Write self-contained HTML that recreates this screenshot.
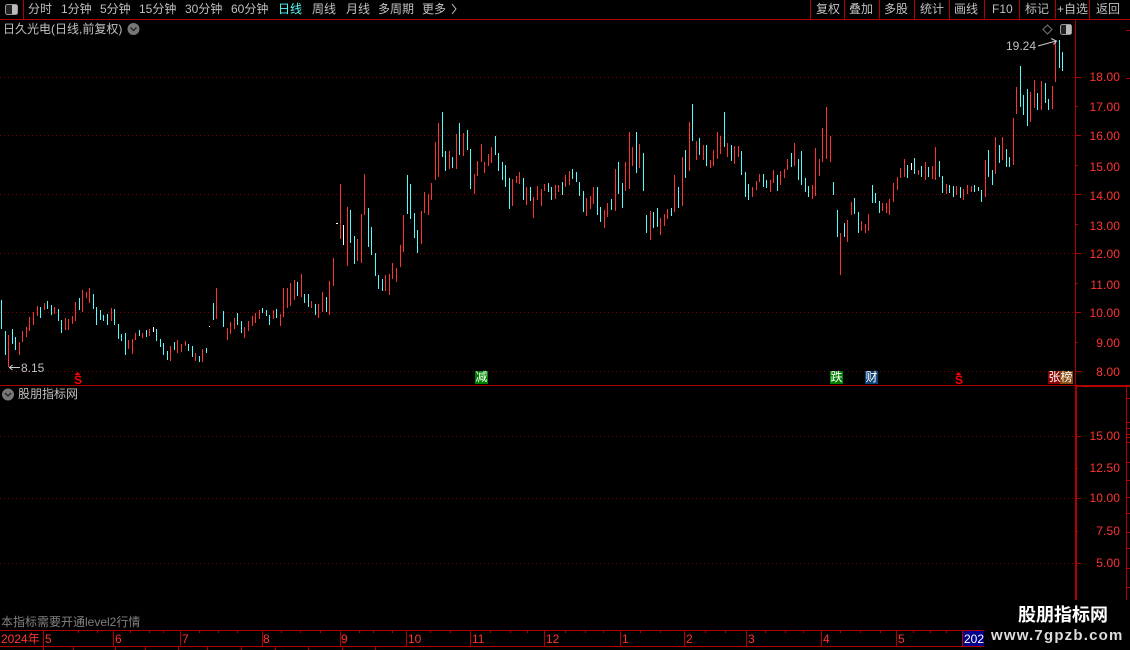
<!DOCTYPE html>
<html><head><meta charset="utf-8"><style>
html,body{margin:0;padding:0;background:#000}
#r{position:relative;width:1130px;height:650px;overflow:hidden;background:#000;font:12px/14px "Liberation Sans","WenQuanYi Zen Hei","Noto Sans CJK SC",sans-serif;color:#c0c0c0}
#r span{position:absolute;white-space:nowrap}
.a{color:#f33;width:50px;text-align:right;left:1070px;letter-spacing:.1px}
.b{top:2px}.x{color:#f33;top:632px;font-size:12px}
.m{color:#fff;width:13px;height:13px;line-height:13px;text-align:center;top:371px}
svg{position:absolute;left:0;top:0}
</style></head><body><div id="r">
<svg width="1130" height="650" shape-rendering="crispEdges" fill="none">
<g stroke="#800000" stroke-dasharray="1 3"><path d="M0 77.5H1075M0 135.5H1075M0 194.5H1075M0 253.5H1075M0 312.5H1075M0 371.5H1075M0 436.5H1075M0 498.5H1075M0 563.5H1075"/></g>
<path stroke="#ff3232" d="M8.5 335V367M19.5 342V355M22.5 331V342M26.5 327V337M29.5 317V331M33.5 312V325M37.5 306V316M44.5 303V310M54.5 307V314M65.5 318V330M68.5 319V330M72.5 316V324M75.5 302V321M82.5 290V312M86.5 292V298M89.5 288V303M111.5 308V321M128.5 340V349M132.5 339V354M135.5 333V340M142.5 333V338M149.5 329V336M170.5 346V361M177.5 340V353M181.5 344V352M185.5 341V346M195.5 353V361M202.5 349V362M216.5 288V319M227.5 328V340M230.5 322V334M234.5 318V329M244.5 327V338M248.5 321V331M252.5 316V326M255.5 313V323M259.5 310V319M273.5 310V319M280.5 314V326M283.5 288V317M287.5 288V308M290.5 283V306M294.5 280V300M301.5 274V297M311.5 301V308M318.5 304V318M322.5 292V312M329.5 281V315M333.5 258V286M340.5 184V239M347.5 207V266M357.5 239V261M361.5 214V263M364.5 174V215M385.5 275V291M389.5 274V295M392.5 263V279M396.5 268V282M400.5 245V267M403.5 215V252M421.5 211V244M424.5 192V213M428.5 194V215M431.5 183V200M435.5 142V180M438.5 123V177M449.5 151V169M456.5 134V169M463.5 133V156M474.5 174V194M477.5 161V176M481.5 144V162M484.5 162V173M488.5 154V166M491.5 147V163M512.5 179V206M516.5 176V183M519.5 172V184M526.5 187V205M533.5 197V218M537.5 186V200M541.5 189V206M544.5 184V191M555.5 185V199M558.5 185V192M565.5 175V187M569.5 171V185M586.5 198V216M590.5 196V209M593.5 187V204M604.5 210V228M607.5 203V217M615.5 169V211M625.5 162V191M629.5 132V189M632.5 147V166M639.5 144V168M650.5 211V240M660.5 218V235M664.5 214V226M667.5 209V219M674.5 175V212M682.5 157V206M689.5 122V171M696.5 141V160M703.5 145V160M710.5 160V168M713.5 150V166M717.5 132V159M720.5 136V154M727.5 143V157M734.5 146V164M738.5 146V157M752.5 187V197M756.5 181V190M759.5 174V182M770.5 180V192M773.5 170V183M780.5 171V185M784.5 169V178M787.5 159V170M794.5 143V166M812.5 185V199M815.5 148V196M819.5 159V176M822.5 128V162M826.5 107V159M830.5 136V162M840.5 233V275M847.5 220V242M851.5 202V215M861.5 221V231M865.5 224V233M868.5 214V231M882.5 203V211M886.5 203V213M889.5 199V215M893.5 183V202M897.5 177V190M900.5 168V178M904.5 159V177M918.5 170V175M925.5 162V180M932.5 166V179M935.5 147V180M946.5 184V194M956.5 186V195M963.5 189V200M967.5 185V194M971.5 186V192M985.5 160V197M995.5 137V174M1002.5 137V160M1013.5 118V165M1016.5 87V114M1030.5 92V122M1034.5 80V108M1041.5 81V110M1052.5 86V109M1055.5 42V82"/>
<path stroke="#54fcfc" d="M1.5 300V329M5.5 331V355M12.5 329V344M15.5 337V350M40.5 307V318M47.5 301V309M51.5 305V315M58.5 309V321M61.5 320V333M79.5 298V310M93.5 294V309M96.5 307V325M100.5 310V320M103.5 315V321M107.5 314V325M114.5 309V325M118.5 324V339M121.5 334V341M125.5 333V355M139.5 330V336M146.5 330V337M156.5 329V341M160.5 339V347M163.5 343V355M167.5 351V360M174.5 342V350M188.5 344V351M192.5 346V357M199.5 356V362M206.5 348V353M213.5 303V320M223.5 311V327M237.5 313V325M241.5 321V333M262.5 308V313M266.5 310V316M269.5 315V325M276.5 309V318M297.5 282V296M304.5 294V303M308.5 294V307M315.5 304V315M326.5 297V312M350.5 210V243M354.5 236V264M368.5 208V247M371.5 227V255M375.5 253V276M378.5 275V289M382.5 279V291M407.5 175V214M410.5 184V219M414.5 213V238M417.5 230V253M442.5 112V157M445.5 151V171M452.5 157V168M459.5 123V155M467.5 130V150M470.5 149V189M495.5 136V155M498.5 153V171M502.5 162V180M505.5 165V187M509.5 178V209M523.5 178V200M530.5 187V201M548.5 183V192M551.5 187V200M562.5 182V195M572.5 169V179M576.5 172V182M579.5 182V196M583.5 191V212M597.5 187V215M600.5 207V222M611.5 199V210M618.5 162V194M622.5 183V208M636.5 132V173M643.5 153V191M646.5 215V233M653.5 212V228M657.5 208V227M671.5 208V216M678.5 187V208M685.5 150V178M692.5 104V141M699.5 138V155M706.5 145V166M724.5 112V147M731.5 145V161M741.5 151V175M745.5 172V197M748.5 184V200M763.5 174V187M766.5 180V188M777.5 175V191M791.5 153V167M798.5 159V180M801.5 151V185M805.5 178V192M808.5 186V197M833.5 182V195M837.5 210V237M844.5 223V237M854.5 198V214M858.5 212V233M872.5 185V203M875.5 193V203M879.5 201V213M907.5 165V178M914.5 158V174M921.5 166V177M928.5 167V177M939.5 161V177M942.5 176V193M949.5 185V193M953.5 186V197M960.5 187V198M974.5 185V192M978.5 187V191M981.5 190V202M988.5 150V177M992.5 170V185M999.5 145V163M1006.5 149V167M1009.5 157V167M1020.5 66V107M1023.5 95V115M1027.5 89V126M1037.5 93V110M1045.5 83V103M1048.5 99V110M1059.5 40V68M1062.5 52V71"/>
<path stroke="#fff" d="M153.5 327V332M209 326.5H210M336 223.5H338M343.5 225V245M911.5 163V170"/>
<g stroke="#b00000">
<path d="M0 19.5H1130M23.5 0V19M810.5 0V19M844.5 0V19M879.5 0V19M914.5 0V19M949.5 0V19M984.5 0V19M1019.5 0V19M1055.5 0V19M1089.5 0V19"/>
<path d="M0 385.5H1076"/>
<path d="M1075.5 20V385"/>
<path d="M1075 77.5H1081M1075 106.5H1078M1075 135.5H1081M1075 165.5H1078M1075 194.5H1081M1075 224.5H1078M1075 253.5H1081M1075 283.5H1078M1075 312.5H1081M1075 342.5H1078M1075 371.5H1081"/>
<path d="M1126 30.5H1130M1126 78.5H1130"/>
<path d="M1126.500 386V600M1126 398.5H1130M1126 422.500H1130M1126 428.500H1130M1126 434.500H1130M1126 437.500H1130M1126 442.500H1130M1126 462.500H1130M1126 480.500H1130M1126 497.500H1130M1126 513.500H1130M1126 532.500H1130M1126 548.500H1130M1126 568.500H1130M1126 587.500H1130"/>
<path d="M1076 436.5H1081M1076 468.5H1078M1076 498.5H1081M1076 531.5H1078M1076 563.5H1081"/>
<path d="M0 630.5H984M0 646.5H984M43.5 631V646M113.5 631V646M180.5 631V646M262.5 631V646M340.5 631V646M406.5 631V646M470.5 631V646M544.5 631V646M620.5 631V646M684.5 631V646M746.5 631V646M821.5 631V646M896.5 631V646M962.5 631V646"/>
<path d="M78.5 631V633M97.5 631V633M130.5 631V633M149.5 631V633M163.5 631V633M199.5 631V633M218.5 631V633M237.5 631V633M281.5 631V633M300.5 631V633M320.5 631V633M359.5 631V633M373.5 631V633M392.5 631V633M430.5 631V633M450.5 631V633M490.5 631V633M510.5 631V633M527.5 631V633M565.5 631V633M585.5 631V633M603.5 631V633M640.5 631V633M660.5 631V633M705.5 631V633M725.5 631V633M765.5 631V633M785.5 631V633M803.5 631V633M840.5 631V633M860.5 631V633M880.5 631V633M913.5 631V633M930.5 631V633M946.5 631V633"/>
<path d="M43.5 647V650M73.5 647V650M115.5 647V650M145.5 647V650M178.5 647V650M207.5 647V650M241.5 647V650M275.5 647V650M308.5 647V650M342.5 647V650M375.5 647V650"/>
</g>
<path stroke="#b00000" stroke-width="2" d="M1076 386H1130M1076 386V600"/>
<rect x="963" y="631" width="21" height="15" fill="#00008b"/>
<rect x="475" y="371" width="13" height="13" fill="#008000"/>
<rect x="830" y="371" width="13" height="13" fill="#008000"/>
<rect x="865" y="371" width="13" height="13" fill="#0f4478"/>
<rect x="1048" y="371" width="12" height="13" fill="#8b0000"/>
<rect x="1060" y="371" width="13" height="13" fill="#8b4a10"/>
<rect x="984" y="600" width="146" height="50" fill="#000"/>
</svg>
<svg width="1130" height="650" fill="none">
<rect x="5.5" y="4.5" width="12" height="10" rx="2" stroke="#999" fill="#222"/><rect x="12" y="5" width="5" height="9" fill="#bbb"/>
<circle cx="133.5" cy="29" r="6" fill="#777"/><path d="M130.5 27.5l3 3 3-3" stroke="#222" stroke-width="1.3"/>
<circle cx="8" cy="394.5" r="6" fill="#777"/><path d="M5 393l3 3 3-3" stroke="#222" stroke-width="1.3"/>
<path d="M1047.5 25l4.5 4.5-4.5 4.5-4.5-4.5z" stroke="#777"/>
<rect x="1060.5" y="24.5" width="11" height="10" rx="2" stroke="#999" fill="#222"/><rect x="1066" y="25" width="5" height="9" fill="#bbb"/>
<path d="M1038 46l18-5M1051 38.500l5.500 2.500-3 3.500" stroke="#ccc"/>
<path d="M20 367.500H9M12.500 365l-3 2.500 3 2.500" stroke="#ccc"/>
<path d="M77.500 372l-3 3h6z" fill="#f00"/>
<path d="M958.500 372l-3 3h6z" fill="#f00"/>
<path d="M452 4l4 5-4 5" stroke="#c0c0c0"/>
</svg>
<span class="b" style="left:28px">分时</span><span class="b" style="left:61px">1分钟</span><span class="b" style="left:100px">5分钟</span><span class="b" style="left:139px">15分钟</span><span class="b" style="left:185px">30分钟</span><span class="b" style="left:231px">60分钟</span><span class="b" style="left:278px;color:#54fcfc">日线</span><span class="b" style="left:312px">周线</span><span class="b" style="left:346px">月线</span><span class="b" style="left:378px">多周期</span><span class="b" style="left:422px">更多</span>
<span class="b" style="left:816px">复权</span><span class="b" style="left:849px">叠加</span><span class="b" style="left:884px">多股</span><span class="b" style="left:920px">统计</span><span class="b" style="left:954px">画线</span><span class="b" style="left:992px">F10</span><span class="b" style="left:1025px">标记</span><span class="b" style="left:1057px">+自选</span><span class="b" style="left:1096px">返回</span>
<span style="left:3px;top:22px">日久光电(日线,前复权)</span>
<span style="left:18px;top:387px">股朋指标网</span>
<span style="left:1006px;top:39px">19.24</span>
<span style="left:21px;top:361px">8.15</span>
<span class="a" style="top:70px">18.00</span><span class="a" style="top:100px">17.00</span><span class="a" style="top:129px">16.00</span><span class="a" style="top:160px">15.00</span><span class="a" style="top:189px">14.00</span><span class="a" style="top:219px">13.00</span><span class="a" style="top:247px">12.00</span><span class="a" style="top:278px">11.00</span><span class="a" style="top:306px">10.00</span><span class="a" style="top:336px">9.00</span><span class="a" style="top:365px">8.00</span>
<span class="a" style="top:429px">15.00</span><span class="a" style="top:461px">12.50</span><span class="a" style="top:491px">10.00</span><span class="a" style="top:524px">7.50</span><span class="a" style="top:556px">5.00</span>
<span style="left:1px;top:615px;color:#808080">本指标需要开通level2行情</span>
<span class="x" style="left:1px">2024年</span><span class="x" style="left:45px">5</span><span class="x" style="left:115px">6</span><span class="x" style="left:182px">7</span><span class="x" style="left:263px">8</span><span class="x" style="left:341px">9</span><span class="x" style="left:408px">10</span><span class="x" style="left:472px">11</span><span class="x" style="left:546px">12</span><span class="x" style="left:622px">1</span><span class="x" style="left:686px">2</span><span class="x" style="left:748px">3</span><span class="x" style="left:823px">4</span><span class="x" style="left:898px">5</span><span class="x" style="left:964px;color:#fff">202</span>
<span class="m" style="left:475px">减</span><span class="m" style="left:830px">跌</span><span class="m" style="left:865px">财</span><span class="m" style="left:1048px">张</span><span class="m" style="left:1060px">榜</span>
<span style="left:74px;top:374px;color:#f00;font-weight:bold;font-size:12px;line-height:12px">S</span><span style="left:955px;top:374px;color:#f00;font-weight:bold;font-size:12px;line-height:12px">S</span>
<span style="left:1018px;top:603px;color:#fff;font:bold 18px/22px 'Noto Sans CJK SC',sans-serif">股朋指标网</span>
<span style="left:991px;top:627px;color:#ddd;font:bold 15px/18px 'Liberation Sans',sans-serif;letter-spacing:1.2px">www.7gpzb.com</span>
</div></body></html>
